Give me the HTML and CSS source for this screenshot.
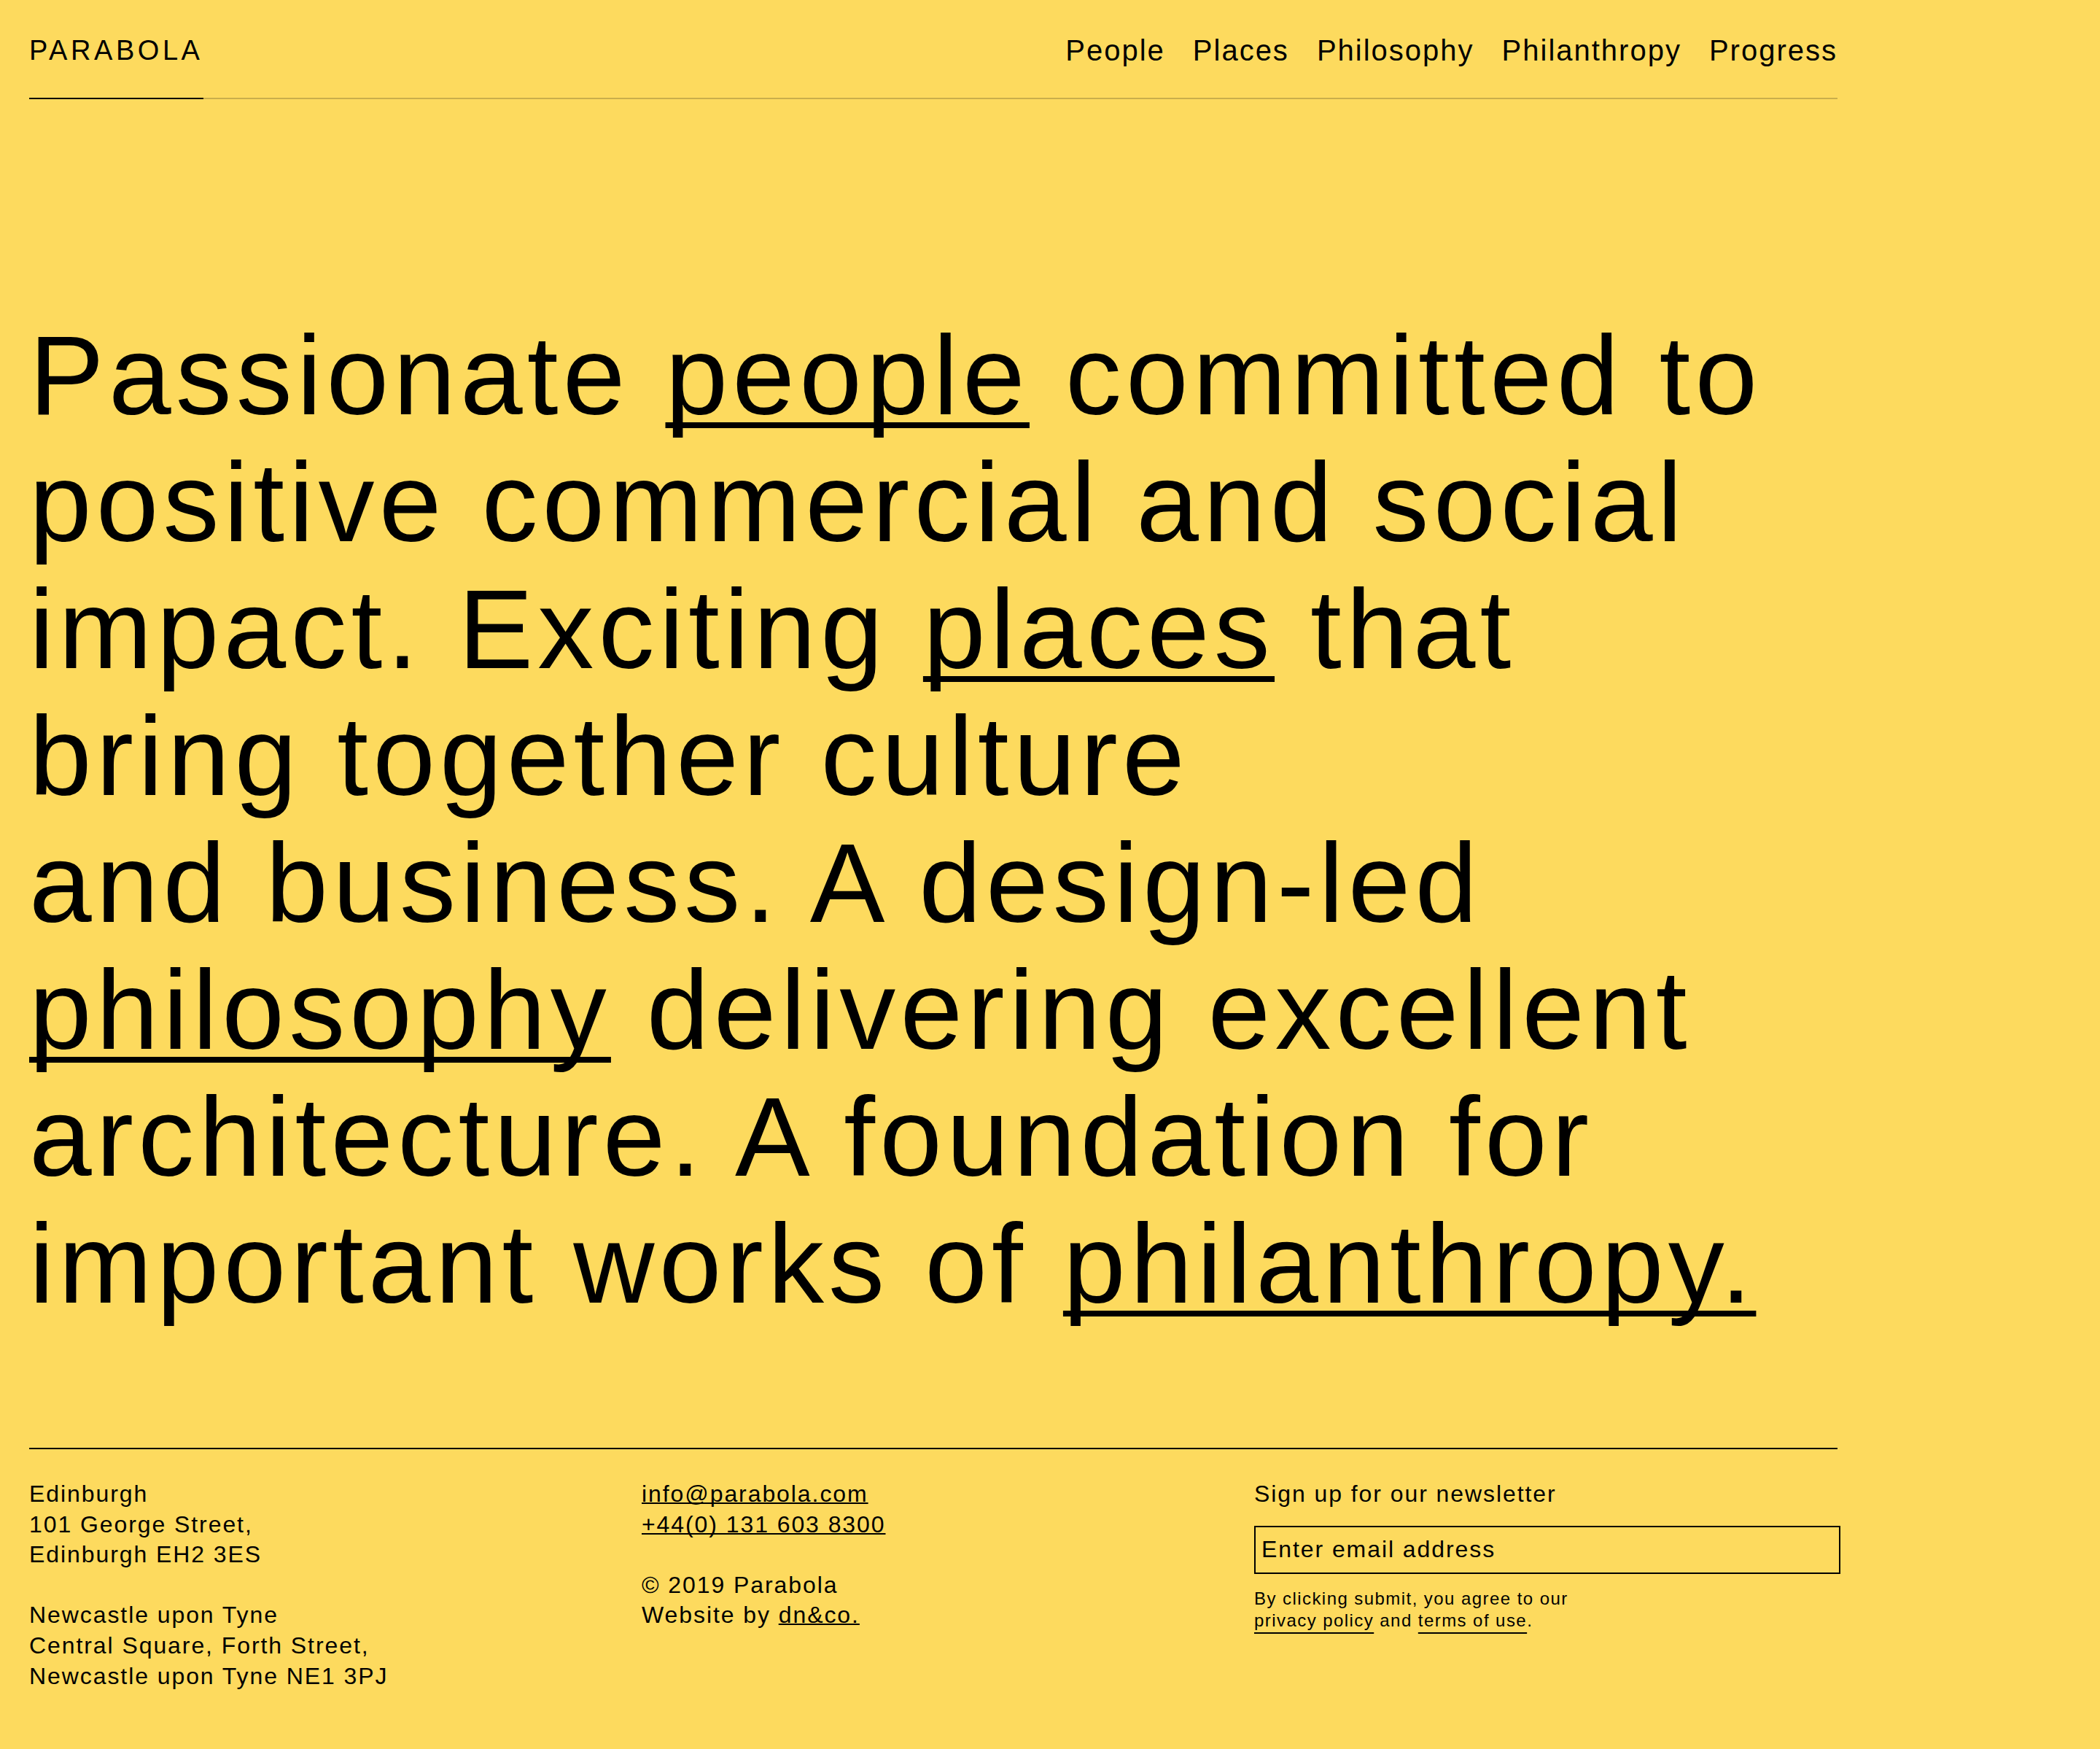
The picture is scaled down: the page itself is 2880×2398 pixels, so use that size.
FILE: index.html
```html
<!DOCTYPE html>
<html lang="en">
<head>
<meta charset="utf-8">
<title>Parabola</title>
<link rel="stylesheet" href="styles.css">
</head>
<body>
<div class="page">
  <header class="site-header">
    <a class="logo" href="#">PARABOLA</a>
    <nav class="nav">
      <a href="#">People</a>
      <a href="#">Places</a>
      <a href="#">Philosophy</a>
      <a href="#">Philanthropy</a>
      <a href="#">Progress</a>
    </nav>
  </header>

  <main class="intro">
    <h1 class="statement">Passionate <a href="#">people</a> committed to<br>positive commercial and social<br>impact. Exciting <a href="#">places</a> that<br>bring together culture<br>and business. A design-led<br><a href="#">philosophy</a> delivering excellent<br>architecture. A foundation for<br>important works of <a href="#">philanthropy.</a></h1>
  </main>

  <footer class="site-footer">
    <div class="col">
      <p>Edinburgh<br>101 George Street,<br>Edinburgh EH2 3ES</p>
      <p>Newcastle upon Tyne<br>Central Square, Forth Street,<br>Newcastle upon Tyne NE1 3PJ</p>
    </div>
    <div class="col">
      <p><a class="ul" href="#">info@parabola.com</a><br><a class="ul" href="#">+44(0) 131 603 8300</a></p>
      <p>© 2019 Parabola<br>Website by <a class="ul" href="#">dn&amp;co.</a></p>
    </div>
    <div class="col">
      <p class="signup-title">Sign up for our newsletter</p>
      <input class="email" type="email" placeholder="Enter email address">
      <p class="legal">By clicking submit, you agree to our<br><a href="#">privacy policy</a> and <a href="#">terms of use</a>.</p>
    </div>
  </footer>
</div>
</body>
</html>
```

FILE: styles.css
```css
html {
  background: #fdda5e;
}

body {
  margin: 0;
  background: #fdda5e;
  color: #000;
  font-family: "Liberation Sans", Arial, sans-serif;
}

a {
  color: inherit;
  text-decoration: none;
}

.page {
  max-width: 2480px;
  padding: 0 40px 120px;
}

/* Header */
.site-header {
  display: flex;
  justify-content: space-between;
  align-items: flex-end;
  padding-top: 47px;
  border-bottom: 2px solid #caae4b;
}

.logo {
  display: block;
  font-size: 38px;
  line-height: 44px;
  letter-spacing: 0.12em;
  padding-bottom: 43px;
  border-bottom: 2px solid #000;
  margin-bottom: -2px;
}

.nav {
  display: flex;
  gap: 38px;
  font-size: 40px;
  line-height: 44px;
  letter-spacing: 0.05em;
  padding-bottom: 43px;
}

/* Statement */
.intro {
  padding-top: 292px;
}

.statement {
  margin: 0;
  font-weight: 400;
  font-size: 154px;
  line-height: 174px;
  letter-spacing: 0.04em;
  white-space: nowrap;
}

.statement a {
  text-decoration: underline;
  text-decoration-thickness: 8px;
  text-underline-offset: 11px;
  text-decoration-skip-ink: none;
}

/* Footer */
.site-footer {
  margin-top: 165px;
  border-top: 2px solid #000;
  padding-top: 41px;
  display: grid;
  grid-template-columns: repeat(3, 1fr);
  column-gap: 40px;
  font-size: 32px;
  line-height: 41.6px;
  letter-spacing: 0.06em;
}

.col p {
  margin: 0 0 41.6px;
}

.col p:last-child {
  margin-bottom: 0;
}

.ul {
  text-decoration: underline;
  text-decoration-thickness: 2px;
  text-underline-offset: 1px;
  text-decoration-skip-ink: none;
}

.col .signup-title {
  margin-bottom: 22px;
}

.email {
  display: block;
  box-sizing: border-box;
  width: calc(100% + 4px);
  height: 66px;
  margin: 0;
  padding: 0 8px;
  border: 2px solid #000;
  border-radius: 0;
  background: transparent;
  color: #000;
  font-family: inherit;
  font-size: 32px;
  letter-spacing: 0.06em;
  outline: none;
}

.email::placeholder {
  color: #000;
  opacity: 1;
}

.col .legal {
  margin-top: 19px;
  font-size: 24px;
  line-height: 30px;
  letter-spacing: 0.06em;
}

.legal a {
  text-decoration: underline;
  text-decoration-thickness: 2px;
  text-underline-offset: 8px;
}
```
